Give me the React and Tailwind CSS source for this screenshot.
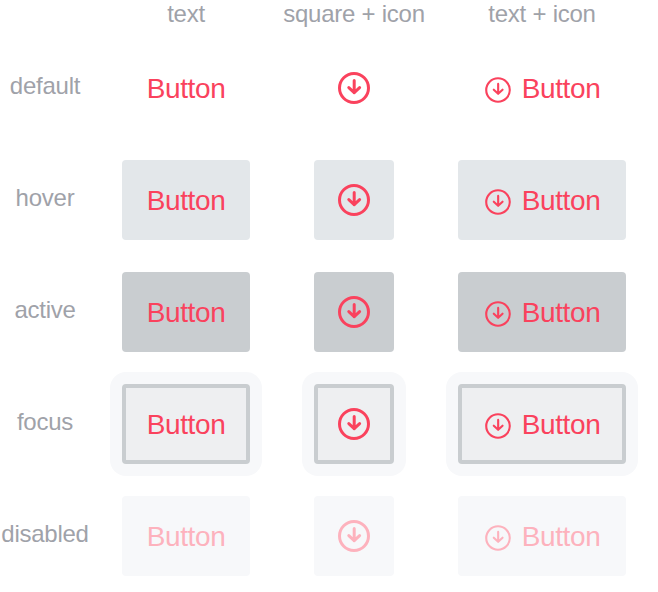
const states = [
  { name: "default", box: "", tone: "text-[#fa425d]" },
  { name: "hover", box: "bg-[#e3e7ea]", tone: "text-[#fa425d]" },
  { name: "active", box: "bg-[#c9cdd0]", tone: "text-[#fa425d]" },
  { name: "focus", box: "bg-[#eeeff1] border-4 border-[#c9cdd0]", halo: "bg-[#f7f8fa]", tone: "text-[#fa425d]" },
  { name: "disabled", box: "bg-[#f7f8fa]", tone: "text-[#fdb2bd]" },
];

function DownCircle({ className, weight }) {
  return (
    <svg viewBox="0 0 32 32" fill="none" stroke="currentColor" strokeWidth={weight} strokeLinecap="round" strokeLinejoin="round" className={className}>
      <circle cx="16" cy="16" r="14.5" />
      <path d="M16.2 8.5v12.2M10.8 15.6l5.4 5.1 5.4-5.1" />
    </svg>
  );
}

function Button({ state, width, icon, label }) {
  return (
    <div className={`-m-3 shrink-0 rounded-2xl p-3 ${state.halo ?? ""}`}>
      <button className={`flex h-20 items-center justify-center rounded-[4px] ${width} ${state.box} ${state.tone}`}>
        {icon && <DownCircle className={label ? "mt-1 mr-[11px] ml-px size-[26px]" : "size-8"} weight={label ? 2.6 : 3} />}
        {label && <span className="pt-0.5 text-[28px] leading-8 tracking-[-0.38px]">Button</span>}
      </button>
    </div>
  );
}

export default function App() {
  return (
    <main className="h-[592px] w-[658px] overflow-hidden bg-white font-['Liberation_Sans',Arial,sans-serif] text-[24px] tracking-[-0.25px] text-[#9fa2a9]">
      <header className="flex h-12 leading-7">
        <span className="ml-[122px] w-32 text-center">text</span>
        <span className="ml-8 w-36 text-center whitespace-nowrap">square + icon</span>
        <span className="ml-8 w-[168px] text-center">text + icon</span>
      </header>
      <div className="flex flex-col gap-8">
        {states.map((state) => (
          <div key={state.name} className="flex h-20 items-center">
            <span className="mr-8 w-[90px] shrink-0 pb-1 text-center">{state.name}</span>
            <Button state={state} width="w-32" label />
            <div className="ml-16">
              <Button state={state} width="w-20" icon />
            </div>
            <div className="ml-16">
              <Button state={state} width="w-[168px]" icon label />
            </div>
          </div>
        ))}
      </div>
    </main>
  );
}
